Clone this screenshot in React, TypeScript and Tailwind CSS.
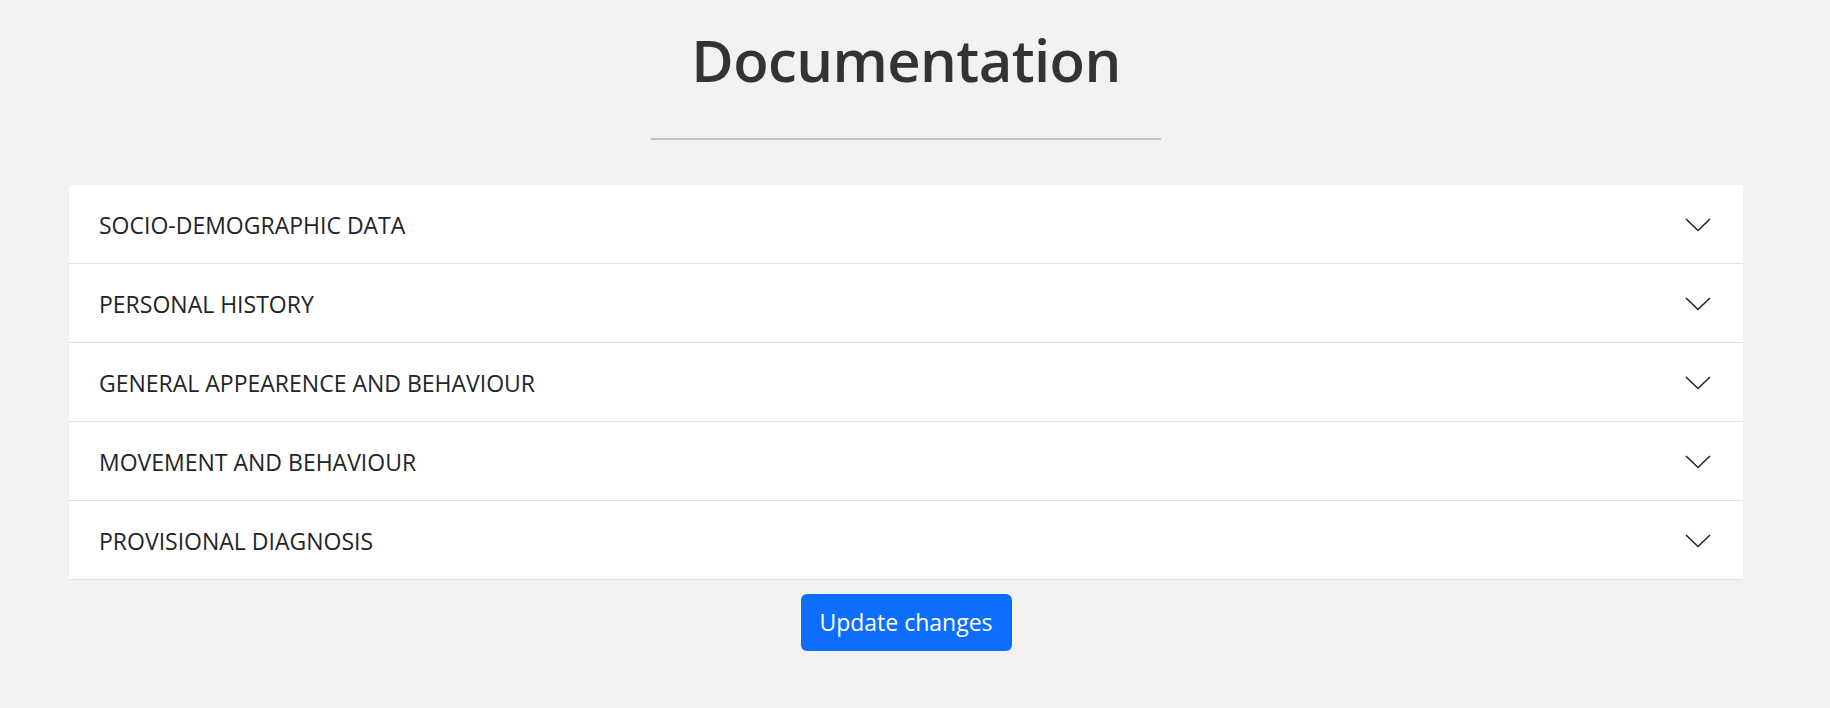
const sections = [
  "SOCIO-DEMOGRAPHIC DATA",
  "PERSONAL HISTORY",
  "GENERAL APPEARENCE AND BEHAVIOUR",
  "MOVEMENT AND BEHAVIOUR",
  "PROVISIONAL DIAGNOSIS",
];

function Chevron() {
  return (
    <svg width="26" height="14" viewBox="0 0 26 14" fill="none" className="text-[#212529]">
      <polyline points="1,1 13,12.5 25,1" stroke="currentColor" strokeWidth="1.6" strokeLinejoin="miter" />
    </svg>
  );
}

export default function App() {
  return (
    <div
      className="min-h-screen bg-[#f2f2f2] text-[#212529]"
      style={{ fontFamily: '"Open Sans", "Noto Sans", sans-serif' }}
    >
      <div className="ml-[69px] w-[1674px] pt-[31px]">
        <div className="flex flex-col items-center">
          <h1 className="text-[58px] leading-[58px] font-semibold text-[#333333] tracking-[-0.6px]">
            Documentation
          </h1>
          <div className="mt-[49px] h-[2px] w-[510px] bg-[#c4c4c4]" />
        </div>

        <div className="mt-[45px] bg-white">
          {sections.map((title) => (
            <button
              key={title}
              className="flex h-[79px] w-full items-center justify-between border-b border-[#dee2e6] pl-[30px] pr-[32px] pt-[2px] text-left"
            >
              <span className="text-[23px] text-[#212529]">{title}</span>
              <Chevron />
            </button>
          ))}
        </div>

        <div className="mt-[14px] flex justify-center">
          <button className="h-[57px] w-[211px] rounded-[6px] bg-[#0d6efd] text-[23px] text-white">
            Update changes
          </button>
        </div>
      </div>
    </div>
  );
}
